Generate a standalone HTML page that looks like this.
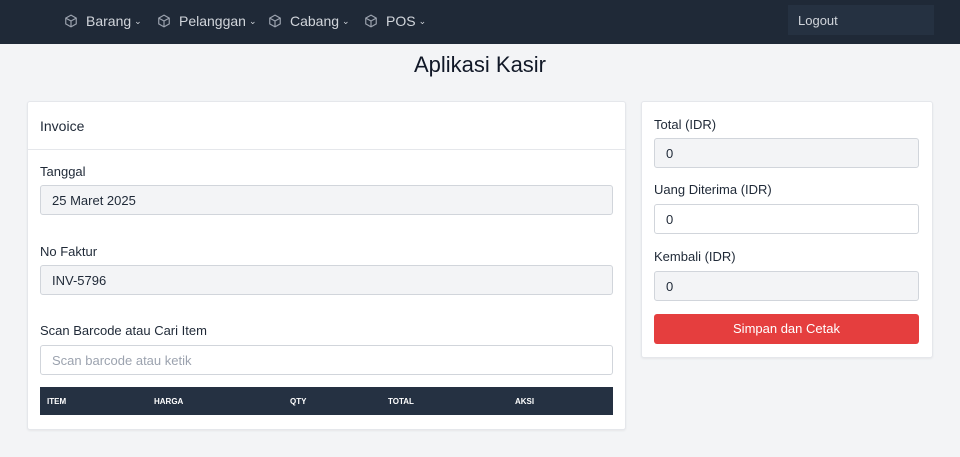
<!DOCTYPE html><html><head><style>
*{box-sizing:border-box;margin:0;padding:0}
body{width:960px;height:457px;background:#f3f4f6;font-family:"Liberation Sans",sans-serif;position:relative;overflow:hidden;color:#1f2937}
.nav{position:absolute;left:0;top:0;width:960px;height:44px;background:#1f2937}
.ni{position:absolute;top:13px;color:#d1d5db;font-size:14px;display:flex;align-items:center}
.ni svg{margin-right:8px}
.chev{font-size:9px;margin-left:3px}
.lo{position:absolute;left:788px;top:5px;width:146px;height:30px;background:#253141;color:#d1d5db;font-size:13px;padding:8px 10px}
h1{position:absolute;top:52px;width:960px;text-align:center;font-size:22px;font-weight:400;color:#111827}
.card{position:absolute;background:#fff;border:1px solid #e5e7eb;border-radius:3px;box-shadow:0 1px 2px rgba(0,0,0,.06)}
.lbl{position:absolute;font-size:13px;color:#1f2937}
.inp{position:absolute;height:30px;border:1px solid #d1d5db;border-radius:3px;font-size:13px;padding:7px 11px;color:#1f2937}
.ro{background:#f3f4f6}
.th{position:absolute;top:387px;left:40px;width:573px;height:28px;background:#253142;color:#fff;font-size:8px;font-weight:700}
.th span{position:absolute;top:10px}
.btn{position:absolute;left:654px;top:314px;width:265px;height:30px;background:#e53e3e;border-radius:3px;color:#fff;font-size:13px;text-align:center;padding-top:7px}
</style></head><body>
<div class="nav">
<div class="ni" style="left:64px"><svg width="14" height="14" viewBox="0 0 24 24" fill="none" stroke="#9ca3af" stroke-width="2"><path d="M12 2l9 5v10l-9 5-9-5V7z M3 7l9 5 9-5 M12 12v10"/></svg>Barang<span class="chev">⌄</span></div>
<div class="ni" style="left:157px"><svg width="14" height="14" viewBox="0 0 24 24" fill="none" stroke="#9ca3af" stroke-width="2"><path d="M12 2l9 5v10l-9 5-9-5V7z M3 7l9 5 9-5 M12 12v10"/></svg>Pelanggan<span class="chev">⌄</span></div>
<div class="ni" style="left:268px"><svg width="14" height="14" viewBox="0 0 24 24" fill="none" stroke="#9ca3af" stroke-width="2"><path d="M12 2l9 5v10l-9 5-9-5V7z M3 7l9 5 9-5 M12 12v10"/></svg>Cabang<span class="chev">⌄</span></div>
<div class="ni" style="left:364px"><svg width="14" height="14" viewBox="0 0 24 24" fill="none" stroke="#9ca3af" stroke-width="2"><path d="M12 2l9 5v10l-9 5-9-5V7z M3 7l9 5 9-5 M12 12v10"/></svg>POS<span class="chev">⌄</span></div>
<div class="lo">Logout</div>
</div>
<h1>Aplikasi Kasir</h1>
<div class="card" style="left:27px;top:101px;width:599px;height:329px"><div style="position:absolute;top:47px;left:0;right:0;border-top:1px solid #e5e7eb"></div></div>
<div class="lbl" style="left:40px;top:118px;font-size:14px">Invoice</div>
<div class="lbl" style="left:40px;top:164px">Tanggal</div>
<div class="inp ro" style="left:40px;top:185px;width:573px">25 Maret 2025</div>
<div class="lbl" style="left:40px;top:244px">No Faktur</div>
<div class="inp ro" style="left:40px;top:265px;width:573px">INV-5796</div>
<div class="lbl" style="left:40px;top:323px">Scan Barcode atau Cari Item</div>
<div class="inp" style="left:40px;top:345px;width:573px;color:#9ca3af">Scan barcode atau ketik</div>
<div class="th"><span style="left:7px">ITEM</span><span style="left:114px">HARGA</span><span style="left:250px">QTY</span><span style="left:348px">TOTAL</span><span style="left:475px">AKSI</span></div>
<div class="card" style="left:641px;top:101px;width:292px;height:257px"></div>
<div class="lbl" style="left:654px;top:117px">Total (IDR)</div>
<div class="inp ro" style="left:654px;top:138px;width:265px">0</div>
<div class="lbl" style="left:654px;top:182px">Uang Diterima (IDR)</div>
<div class="inp" style="left:654px;top:204px;width:265px">0</div>
<div class="lbl" style="left:654px;top:249px">Kembali (IDR)</div>
<div class="inp ro" style="left:654px;top:271px;width:265px">0</div>
<div class="btn">Simpan dan Cetak</div>
</body></html>
